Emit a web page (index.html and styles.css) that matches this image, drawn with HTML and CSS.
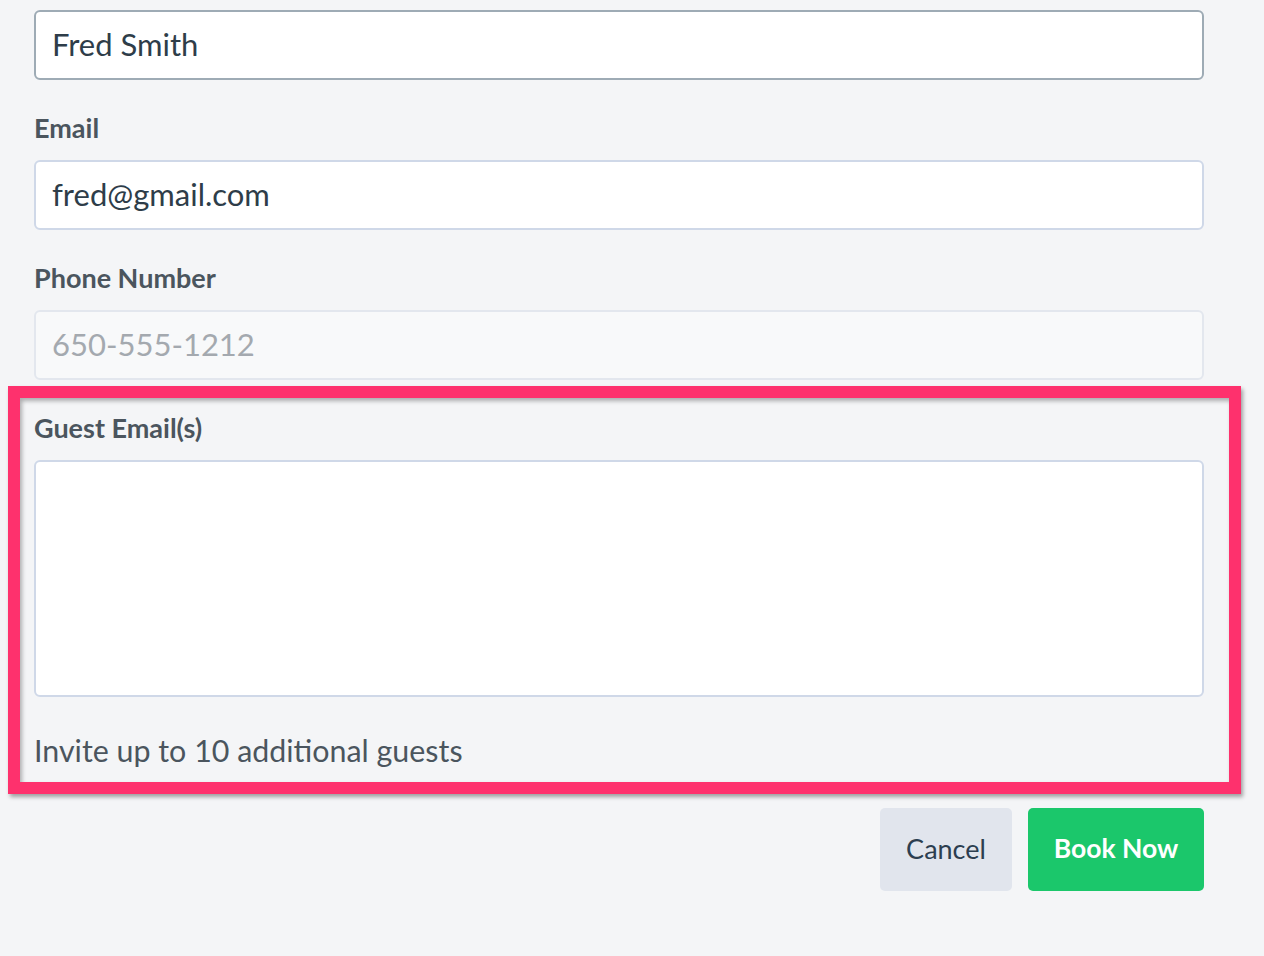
FILE: index.html
```html
<!DOCTYPE html>
<html>
<head>
<meta charset="utf-8">
<link rel="stylesheet" href="styles.css">
</head>
<body>
<form class="form">
  <div class="group first">
    <input class="field name" type="text" value="Fred Smith">
  </div>
  <div class="group">
    <label class="label">Email</label>
    <input class="field email" type="text" value="fred@gmail.com">
  </div>
  <div class="group">
    <label class="label">Phone Number</label>
    <input class="field phone" type="text" placeholder="650-555-1212">
  </div>
  <div class="group highlight">
    <label class="label">Guest Email(s)</label>
    <textarea class="field area"></textarea>
    <p class="help">Invite up to 10 additional guests</p>
  </div>
  <div class="actions">
    <button type="button" class="btn cancel">Cancel</button>
    <button type="button" class="btn book">Book Now</button>
  </div>
</form>
</body>
</html>
```

FILE: styles.css
```css
html, body {
  margin: 0;
  padding: 0;
  background: #f4f5f7;
}
body {
  font-family: Lato, "Open Sans", sans-serif;
  color: #2e3d49;
}
.form {
  width: 1170px;
  padding: 10px 0 0 34px;
  display: flex;
  flex-direction: column;
}
.group {
  display: flex;
  flex-direction: column;
}
.label {
  margin-top: 33px;
  margin-bottom: 17px;
  font-size: 27px;
  line-height: 30px;
  font-weight: 700;
  color: #4b555e;
}
.field {
  box-sizing: border-box;
  width: 100%;
  height: 70px;
  margin: 0;
  padding: 0 16px 3px;
  border: 2px solid #cfd8e8;
  border-radius: 6px;
  background: #fff;
  font-family: inherit;
  font-size: 31px;
  color: #2e3d49;
  outline: none;
}
.field.name {
  border-color: #9eabb5;
}
.field.phone {
  background: #f8f9fa;
  border-color: #e3e7ee;
}
.field.phone::placeholder {
  color: #a4a9af;
  opacity: 1;
}
.field.area {
  height: 237px;
  resize: none;
  display: block;
}
.help {
  margin: 35px 0 0;
  font-size: 30.4px;
  line-height: 36px;
  color: #4b555e;
}
.highlight {
  position: relative;
}
.highlight::before {
  content: "";
  position: absolute;
  top: 6px;
  left: -26px;
  right: -37px;
  bottom: -26px;
  border: 12px solid #fe316d;
  box-shadow: 2px 3px 4px rgba(0, 0, 0, 0.35), inset 2px 3px 4px rgba(0, 0, 0, 0.3);
  pointer-events: none;
}
.actions {
  margin-top: 40px;
  display: flex;
  justify-content: flex-end;
  gap: 16px;
}
.btn {
  height: 83px;
  border: none;
  border-radius: 5px;
  font-family: inherit;
  font-size: 27px;
  padding: 0 0 3px;
}
.cancel {
  width: 132px;
  background: #e1e5ed;
  color: #2c3e50;
}
.book {
  width: 176px;
  background: #1bc76b;
  color: #fff;
  font-weight: 700;
  font-size: 26.5px;
}
```
